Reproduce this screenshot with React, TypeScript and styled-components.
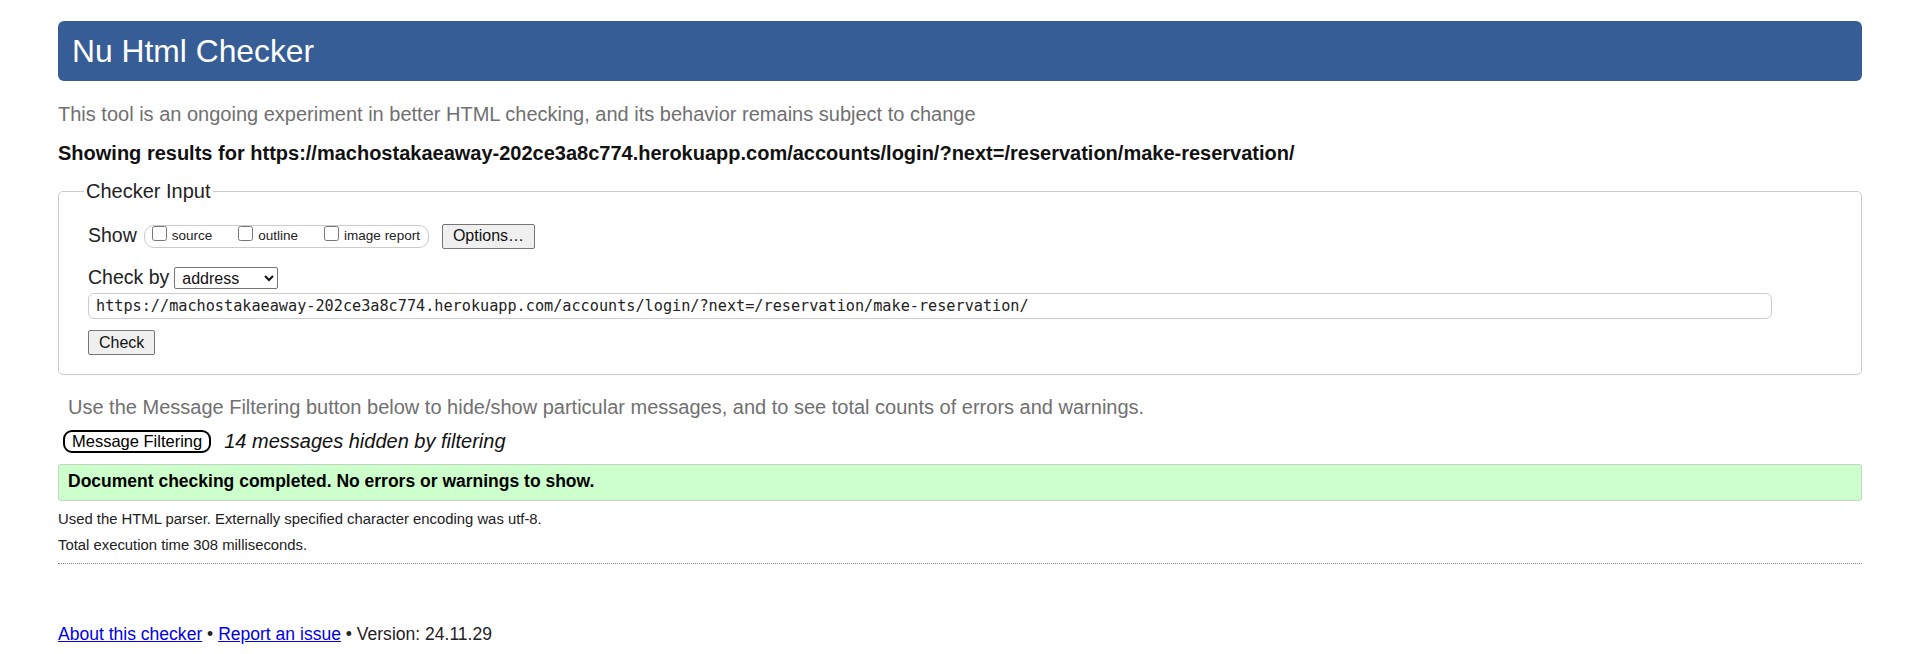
import styled, { createGlobalStyle } from 'styled-components';

const checkedUrl =
  'https://machostakaeaway-202ce3a8c774.herokuapp.com/accounts/login/?next=/reservation/make-reservation/';

const GlobalStyle = createGlobalStyle`
  html, body {
    margin: 0;
    padding: 0;
    background: #fff;
  }
  body {
    font-family: "Liberation Sans", Arial, sans-serif;
    color: #222;
  }
`;

const Page = styled.div`
  padding: 21px 58px 0;
`;

const Banner = styled.h1`
  margin: 0;
  height: 60px;
  line-height: 60px;
  padding: 0 14px;
  background: #365d95;
  border-radius: 6px;
  color: #fff;
  font-size: 31.8px;
  font-weight: normal;
`;

const Intro = styled.p`
  margin: 21px 0 0;
  font-size: 20px;
  line-height: 24px;
  color: #707070;
`;

const ResultsFor = styled.p`
  margin: 15px 0 0;
  font-size: 20px;
  line-height: 24px;
  font-weight: bold;
  color: #111;
`;

const CheckerFieldset = styled.fieldset`
  margin: 15px 0 0;
  padding: 21px 29px 19px;
  border: 1px solid #ccc;
  border-radius: 5px;
  min-width: 0;
`;

const Legend = styled.legend`
  margin-left: -4px;
  padding: 0 2px;
  font-size: 20px;
  line-height: 22px;
`;

const FieldRow = styled.div<{ $height: number; $top?: number }>`
  display: flex;
  align-items: center;
  height: ${p => p.$height}px;
  margin-top: ${p => p.$top ?? 0}px;
`;

const RowLabel = styled.span`
  font-size: 19.5px;
  line-height: 22px;
  margin-bottom: 3px;
`;

const ShowGroup = styled.span`
  display: flex;
  align-items: center;
  height: 23px;
  box-sizing: border-box;
  margin-left: 7px;
  padding: 0 8px 0 7px;
  border: 1px solid #ccc;
  border-radius: 10px;
`;

const CheckOption = styled.label`
  display: flex;
  align-items: center;
  gap: 5px;
  font-size: 13.5px;
  line-height: 18px;
  & + & {
    margin-left: 26px;
  }
`;

const Checkbox = styled.input`
  width: 15px;
  height: 15px;
  margin: 0 0 6px 0;
`;

const PlainButton = styled.button<{ $left?: number }>`
  height: 25px;
  box-sizing: border-box;
  margin-left: ${p => p.$left ?? 0}px;
  padding: 0 10px;
  font-family: "Liberation Sans", Arial, sans-serif;
  font-size: 16px;
  color: #111;
  background: #efefef;
  border: 1px solid #767676;
  border-radius: 2px;
`;

const Select = styled.select`
  width: 104px;
  height: 22px;
  margin-left: 5px;
  padding: 0 0 0 3px;
  font-family: "Liberation Sans", Arial, sans-serif;
  font-size: 16px;
  color: #111;
  background: #fff;
  border: 1px solid #767676;
  border-radius: 2px;
`;

const UrlInput = styled.input`
  display: block;
  box-sizing: border-box;
  width: calc(100% - 60px);
  height: 26px;
  margin-top: 4px;
  padding: 0 7px;
  font-family: "DejaVu Sans Mono", "Liberation Mono", monospace;
  font-size: 15.2px;
  color: #222;
  border: 1px solid #ccc;
  border-radius: 6px;
`;

const CheckRow = styled.div`
  margin-top: 11px;
`;

const FilterNote = styled.p`
  margin: 20px 0 0;
  padding-left: 10px;
  font-size: 20px;
  line-height: 24px;
  color: #707070;
`;

const FilterRow = styled.div`
  display: flex;
  align-items: center;
  height: 23px;
  margin-top: 11px;
`;

const FilterButton = styled.button`
  height: 23px;
  box-sizing: border-box;
  margin-left: 5px;
  padding: 0 7px;
  font-family: "Liberation Sans", Arial, sans-serif;
  font-size: 16.5px;
  color: #000;
  background: #fff;
  border: 2px solid #000;
  border-radius: 9px;
`;

const HiddenCount = styled.span`
  margin: 0 0 2px 13px;
  font-size: 20px;
  line-height: 24px;
  font-style: italic;
  color: #111;
`;

const SuccessBox = styled.div`
  margin-top: 11px;
  padding: 5px 9px 8px;
  background: #ccffcc;
  border: 1px solid #c4d4c4;
  border-radius: 3px;
  font-size: 17.5px;
  line-height: 22px;
  font-weight: bold;
  color: #000;
`;

const Meta = styled.p<{ $top: number }>`
  margin: ${p => p.$top}px 0 0;
  font-size: 14.85px;
  line-height: 18px;
  color: #222;
`;

const Rule = styled.hr`
  margin: 9px 0 0;
  border: 0;
  border-top: 1px dotted #888;
  height: 0;
`;

const Footer = styled.p`
  margin: 59px 0 0;
  font-size: 17.55px;
  line-height: 22px;
  color: #222;
`;

const FooterLink = styled.a`
  color: #0000ee;
  text-decoration: underline;
`;

const showOptions = ['source', 'outline', 'image report'];

const App = () => {
  return (
    <Page>
      <GlobalStyle />
      <Banner>Nu Html Checker</Banner>

      <Intro>
        This tool is an ongoing experiment in better HTML checking, and its behavior remains subject to change
      </Intro>
      <ResultsFor>Showing results for {checkedUrl}</ResultsFor>

      <CheckerFieldset>
        <Legend>Checker Input</Legend>

        <FieldRow $height={26}>
          <RowLabel>Show</RowLabel>
          <ShowGroup>
            {showOptions.map(option => (
              <CheckOption key={option}>
                <Checkbox type="checkbox" />
                {option}
              </CheckOption>
            ))}
          </ShowGroup>
          <PlainButton $left={13}>Options…</PlainButton>
        </FieldRow>

        <FieldRow $height={22} $top={18}>
          <RowLabel>Check by</RowLabel>
          <Select defaultValue="address">
            <option value="address">address</option>
            <option value="file">file upload</option>
            <option value="text">text input</option>
          </Select>
        </FieldRow>

        <UrlInput type="url" defaultValue={checkedUrl} />

        <CheckRow>
          <PlainButton>Check</PlainButton>
        </CheckRow>
      </CheckerFieldset>

      <FilterNote>
        Use the Message Filtering button below to hide/show particular messages, and to see total counts of errors and warnings.
      </FilterNote>

      <FilterRow>
        <FilterButton>Message Filtering</FilterButton>
        <HiddenCount>14 messages hidden by filtering</HiddenCount>
      </FilterRow>

      <SuccessBox>Document checking completed. No errors or warnings to show.</SuccessBox>

      <Meta $top={9}>Used the HTML parser. Externally specified character encoding was utf-8.</Meta>
      <Meta $top={8}>Total execution time 308 milliseconds.</Meta>
      <Rule />

      <Footer>
        <FooterLink href="#about">About this checker</FooterLink> •{' '}
        <FooterLink href="#issue">Report an issue</FooterLink> • Version: 24.11.29
      </Footer>
    </Page>
  );
};

export default App;
